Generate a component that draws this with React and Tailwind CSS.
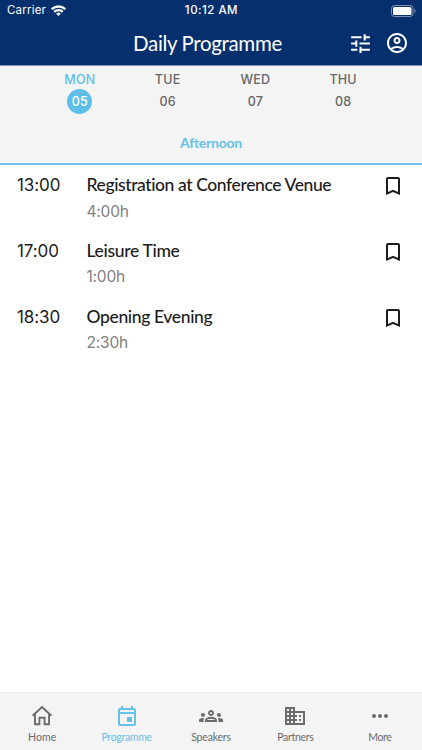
import {
  MdTune,
  MdOutlineAccountCircle,
  MdBookmarkBorder,
  MdOutlineEvent,
  MdOutlineGroups,
  MdBusiness,
  MdMoreHoriz,
} from "react-icons/md";

const HomeIcon = () => (
  <svg width="24" height="24" viewBox="0 0 24 24" fill="none" stroke="currentColor" strokeWidth="1.9">
    <path d="M2.600 11.800 12 3l9.400 8.800" />
    <path d="M5 10.200V20.300h4.400v-6.500h5.200v6.500H19V10.200" />
  </svg>
);

const days = [
  { name: "MON", date: "05", active: true },
  { name: "TUE", date: "06" },
  { name: "WED", date: "07" },
  { name: "THU", date: "08" },
];

const sessions = [
  { time: "13:00", title: "Registration at Conference Venue", duration: "4:00h", spacing: "tracking-[-0.4px]" },
  { time: "17:00", title: "Leisure Time", duration: "1:00h", spacing: "tracking-[-0.32px]" },
  { time: "18:30", title: "Opening Evening", duration: "2:30h", spacing: "tracking-[-0.36px]" },
];

const tabs = [
  { name: "Home", Icon: HomeIcon, spacing: "tracking-[0.05px]" },
  { name: "Programme", Icon: MdOutlineEvent, active: true, spacing: "tracking-[-0.3px]" },
  { name: "Speakers", Icon: MdOutlineGroups, spacing: "tracking-[-0.2px]" },
  { name: "Partners", Icon: MdBusiness, spacing: "tracking-[-0.3px]" },
  { name: "More", Icon: MdMoreHoriz, spacing: "tracking-[-0.4px]" },
];

const StatusBar = () => (
  <div className="grid grid-cols-3 items-center h-[22px] pl-[7px] pr-[6px] text-[11.5px]">
    <div className="flex items-center gap-[5px]">
      <span className="tracking-[0.2px]">Carrier</span>
      <svg className="mb-[2px]" width="15" height="11" viewBox="0 0 15 11" fill="none" stroke="currentColor" strokeWidth="2.3">
        <path d="M0.8 4.200a9.600 9.600 0 0 1 13.400 0" />
        <path d="M3.200 6.900a6.100 6.100 0 0 1 8.600 0" />
        <path d="M7.500 11 5.200 8.700a3.300 3.300 0 0 1 4.600 0z" fill="currentColor" stroke="none" />
      </svg>
    </div>
    <span className="text-center font-medium tracking-[0.5px]">10:12 AM</span>
    <svg className="justify-self-end mb-px" width="25" height="12" viewBox="0 0 25 12" fill="none">
      <rect x="0.5" y="0.5" width="21.5" height="11" rx="3" stroke="#8193b7" />
      <rect x="2" y="2" width="18.5" height="8" rx="1.6" fill="#fff" />
      <path d="M23.300 4v4c.8-.3 1.200-1.100 1.200-2s-.4-1.700-1.200-2z" fill="#8193b7" />
    </svg>
  </div>
);

const Header = () => (
  <header className="h-[66px] shrink-0 bg-[#052f6d] border-b border-[#8495b6] text-white">
    <StatusBar />
    <div className="grid grid-cols-[1fr_auto_1fr] items-center h-[43px] pl-[6px] pr-[13px]">
      <span />
      <h1 className="font-[Lato] text-[20.5px] leading-6 tracking-[-0.35px] pb-[2px]">Daily Programme</h1>
      <div className="flex justify-end gap-3">
        <MdTune size={25} />
        <MdOutlineAccountCircle size={24} />
      </div>
    </div>
  </header>
);

const DayPicker = () => (
  <div className="h-[99px] shrink-0 bg-[#f4f4f4] border-b-2 border-[#6fc4e8]">
    <div className="grid grid-cols-4 pl-9 pr-[35px] pt-[6px]">
      {days.map((day) => (
        <button key={day.name} className="flex flex-col items-center text-[12.5px] leading-4 font-medium text-[#666] tracking-[0.2px]">
          <span className={day.active ? "text-[#5dbfe8]" : ""}>{day.name}</span>
          <span
            className={
              day.active
                ? "mt-px size-[25px] flex items-center justify-center rounded-full bg-[#5dbfe8] text-white"
                : "mt-px size-[25px] flex items-center justify-center"
            }
          >
            {day.date}
          </span>
        </button>
      ))}
    </div>
    <p className="mt-[19px] text-center font-[Lato] font-bold text-[14px] leading-5 tracking-[-0.25px] text-[#66c1e7]">Afternoon</p>
  </div>
);

const Session = ({ session }) => (
  <li className="flex h-[65.8px] pt-[9px] pl-[17px] pr-[17px] text-[#1c1c1c]">
    <span className="w-[69.5px] text-[17px] leading-[22px] tracking-[-0.1px]">{session.time}</span>
    <div className="flex-1">
      <h2 className={`font-[Lato] font-medium text-[17.5px] leading-[22px] ${session.spacing}`}>{session.title}</h2>
      <p className="mt-[5.500px] text-[15.5px] leading-5 tracking-[-0.2px] text-[#808080]">{session.duration}</p>
    </div>
    <MdBookmarkBorder size={24} className="text-[#1c1c1c]" />
  </li>
);

const TabBar = () => (
  <nav className="grid grid-cols-5 h-[58px] shrink-0 bg-[#f4f4f4] border-t border-[#ececec]">
    {tabs.map(({ name, Icon, active, spacing }) => (
      <button
        key={name}
        className={
          active
            ? "flex flex-col items-center pt-[11px] font-[Lato] text-[10.5px] text-[#66c1e7]"
            : "flex flex-col items-center pt-[11px] font-[Lato] text-[10.5px] text-[#6b6b6b]"
        }
      >
        <Icon size={24} />
        <span className={`mt-px leading-4 ${spacing}`}>{name}</span>
      </button>
    ))}
  </nav>
);

export default function App() {
  return (
    <div className="flex flex-col w-full h-[750px] bg-white font-[Inter,sans-serif] overflow-hidden">
      <Header />
      <DayPicker />
      <ul className="flex-1">
        {sessions.map((session) => (
          <Session key={session.time} session={session} />
        ))}
      </ul>
      <TabBar />
    </div>
  );
}
